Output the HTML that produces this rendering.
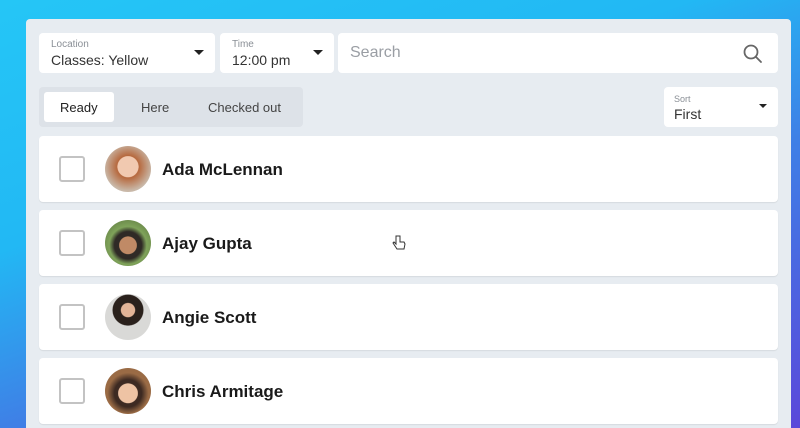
<!DOCTYPE html>
<html><head><style>
*{box-sizing:border-box;margin:0;padding:0}
html,body{width:800px;height:428px;overflow:hidden}
body{font-family:"Liberation Sans",sans-serif;position:relative;
background:linear-gradient(160deg,#25c6f6 0%,#22b8f4 35%,#3f7fe6 60%,#5a48da 100%);}
.panel{position:absolute;left:26px;top:19px;width:765px;height:409px;background:#e7ecf1;border-radius:4px 4px 0 0}
.box{position:absolute;background:#fff;border-radius:4px}
.lbl{position:absolute;font-size:10px;color:#8a8f96}
.val{position:absolute;font-size:14px;color:#333}
.caret{position:absolute;width:0;height:0;border-left:5px solid transparent;border-right:5px solid transparent;border-top:5px solid #222}
.row{position:absolute;left:13px;width:739px;height:66px;background:#fff;border-radius:4px;box-shadow:0 1px 1px rgba(0,0,0,.08)}
.cb{position:absolute;left:20px;top:20px;width:26px;height:26px;border:2px solid #c3c3c3;border-radius:3px}
.av{position:absolute;left:66px;top:10px;width:46px;height:46px;border-radius:50%;overflow:hidden}
.nm{position:absolute;left:123px;top:24px;font-size:17px;font-weight:bold;color:#1a1a1a}
</style></head><body>
<div class="panel">
 <div class="box" style="left:13px;top:14px;width:176px;height:40px">
  <div class="lbl" style="left:12px;top:6px">Location</div>
  <div class="val" style="left:12px;top:19px">Classes: Yellow</div>
  <div class="caret" style="left:155px;top:17px"></div></div>
 <div class="box" style="left:194px;top:14px;width:114px;height:40px">
  <div class="lbl" style="left:12px;top:6px">Time</div>
  <div class="val" style="left:12px;top:19px">12:00 pm</div>
  <div class="caret" style="left:93px;top:17px"></div></div>
 <div class="box" style="left:312px;top:14px;width:440px;height:40px">
  <div style="position:absolute;left:12px;top:11px;font-size:16px;color:#9a9ea4">Search</div>
  <svg style="position:absolute;left:405px;top:11px" width="20" height="20" viewBox="0 0 20 20"><circle cx="8" cy="8" r="6.5" fill="none" stroke="#666" stroke-width="1.8"/><line x1="12.8" y1="12.8" x2="18" y2="18" stroke="#666" stroke-width="1.8" stroke-linecap="round"/></svg></div>
 <div style="position:absolute;left:13px;top:68px;width:264px;height:40px;background:#dde2e8;border-radius:4px">
  <div style="position:absolute;left:5px;top:5px;width:70px;height:30px;background:#fff;border-radius:3px"></div>
  <div style="position:absolute;left:21px;top:13px;font-size:13px;color:#222">Ready</div>
  <div style="position:absolute;left:102px;top:13px;font-size:13px;color:#444">Here</div>
  <div style="position:absolute;left:169px;top:13px;font-size:13px;color:#444">Checked out</div></div>
 <div class="box" style="left:638px;top:68px;width:114px;height:40px">
  <div class="lbl" style="left:10px;top:7px;font-size:9px">Sort</div>
  <div class="val" style="left:10px;top:19px">First</div>
  <div class="caret" style="left:95px;top:17px;border-width:4px 4px 0 4px"></div></div>

 <div class="row" style="top:117px"><div class="cb"></div>
  <div class="av" style="background:radial-gradient(circle at 50% 45%,#f1c9b0 0 30%,#b6683d 32%,#c9b8a8 70%)"></div>
  <div class="nm">Ada McLennan</div></div>
 <div class="row" style="top:191px"><div class="cb"></div>
  <div class="av" style="background:radial-gradient(circle at 50% 55%,#c08a66 0 25%,#2f2a26 27% 40%,#7fa35a 55%,#566e3a)"></div>
  <div class="nm">Ajay Gupta</div></div>
 <div class="row" style="top:265px"><div class="cb"></div>
  <div class="av" style="background:radial-gradient(circle at 50% 35%,#e2b497 0 18%,#2a211c 20% 40%,#d9d9d7 42%);"></div>
  <div class="nm">Angie Scott</div></div>
 <div class="row" style="top:339px"><div class="cb"></div>
  <div class="av" style="background:radial-gradient(circle at 50% 55%,#eec3a4 0 28%,#3d2a22 30% 40%,#9a6b45 60%)"></div>
  <div class="nm">Chris Armitage</div></div>
</div>
<svg style="position:absolute;left:392px;top:235px" width="14" height="16" viewBox="0 0 14 16"><path d="M4 1v8l-2-2-1 1 4 6h7l1-5-1-2H8V1H4z" fill="#fff" stroke="#333" stroke-width="1"/></svg>
</body></html>
